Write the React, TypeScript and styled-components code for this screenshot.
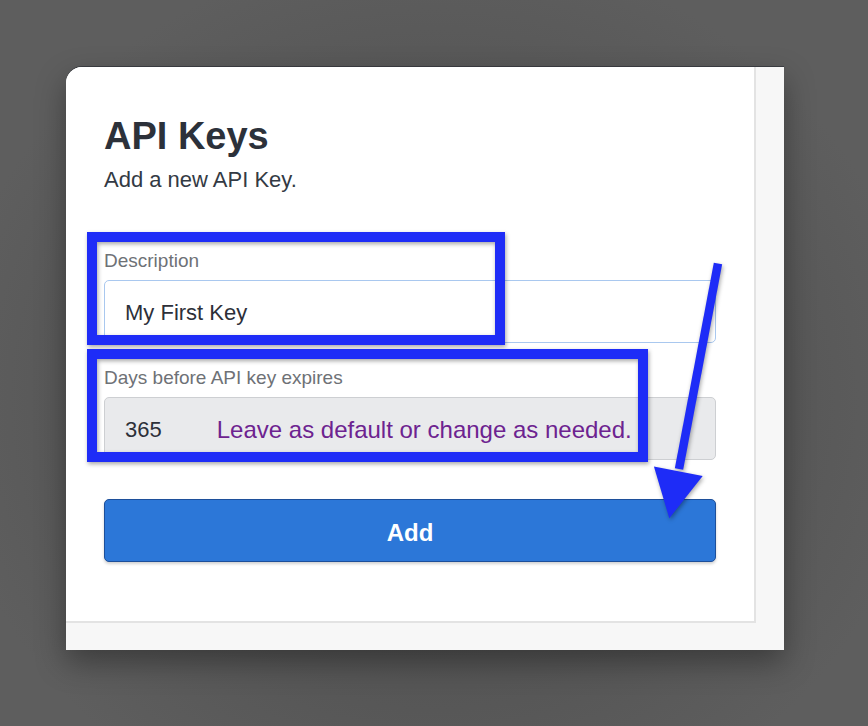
import React from "react";
import styled, { createGlobalStyle } from "styled-components";

const GlobalStyle = createGlobalStyle`
  html, body {
    margin: 0;
    padding: 0;
    background: #5e5e5e;
  }
  body {
    font-family: "Liberation Sans", Arial, Helvetica, sans-serif;
    width: 868px;
    height: 726px;
    overflow: hidden;
  }
`;

const Stage = styled.div`
  padding: 67px 0 0 66px;
  box-sizing: border-box;
  width: 868px;
  height: 726px;
  background: radial-gradient(ellipse at 50% 55%, #4a4a4a 0%, #575757 55%, #5e5e5e 80%);
`;

const Panel = styled.div`
  width: 718px;
  box-sizing: border-box;
  background: #f7f7f7;
  padding: 0 28px 27px 0;
  border-top-left-radius: 16px;
  overflow: hidden;
  box-shadow: 0 12px 30px rgba(0, 0, 0, 0.35), 0 -1px 0 rgba(40, 44, 52, 0.6);
`;

const Card = styled.div`
  position: relative;
  width: 690px;
  box-sizing: border-box;
  background: #ffffff;
  border-right: 2px solid #e3e3e3;
  border-bottom: 2px solid #e3e3e3;
  padding: 47px 38px 59px 38px;
`;

const Title = styled.h1`
  margin: 0;
  font-size: 38px;
  line-height: 44px;
  font-weight: 700;
  color: #2c313a;
`;

const Subtitle = styled.p`
  margin: 9px 0 0;
  font-size: 22px;
  line-height: 26px;
  color: #333a44;
`;

const Field = styled.div<{ $top: number }>`
  display: flex;
  flex-direction: column;
  gap: 8px;
  margin-top: ${(p) => p.$top}px;
`;

const Label = styled.label`
  font-size: 19px;
  line-height: 22px;
  color: #6e7176;
  font-weight: 400;
`;

const Input = styled.div<{ $variant: "focus" | "disabled" }>`
  height: 63px;
  box-sizing: border-box;
  display: flex;
  align-items: center;
  padding: 2px 20px 0;
  border-radius: 5px;
  border: 1px solid ${(p) => (p.$variant === "focus" ? "#a9c8ef" : "#cdcfd2")};
  background: ${(p) => (p.$variant === "focus" ? "#ffffff" : "#e9eaec")};
  font-size: 22px;
  line-height: 26px;
  color: #2d3039;
`;

const Note = styled.span`
  margin-left: 55px;
  font-size: 24px;
  line-height: 28px;
  color: #6d2390;
`;

const Button = styled.button`
  display: block;
  width: 100%;
  height: 63px;
  margin-top: 39px;
  padding: 5px 0 0;
  border-radius: 5px;
  border: 1px solid #1d4f9a;
  background: #2c77d8;
  color: #ffffff;
  font-family: "Liberation Sans", Arial, Helvetica, sans-serif;
  font-size: 24px;
  line-height: 28px;
  font-weight: 700;
  box-shadow: 0 2px 3px rgba(0, 0, 0, 0.18);
  cursor: pointer;
`;

const Highlight = styled.div<{ $left: number; $top: number; $w: number; $h: number }>`
  position: absolute;
  left: ${(p) => p.$left}px;
  top: ${(p) => p.$top}px;
  width: ${(p) => p.$w}px;
  height: ${(p) => p.$h}px;
  box-sizing: border-box;
  border: 10px solid #1e2cf7;
  filter: drop-shadow(1px 2px 2px rgba(0, 0, 0, 0.35));
  pointer-events: none;
`;

const ArrowLayer = styled.svg`
  position: absolute;
  left: 0;
  top: 0;
  width: 690px;
  height: 556px;
  pointer-events: none;
  filter: drop-shadow(1px 2px 2px rgba(0, 0, 0, 0.35));
`;

export default function App() {
  return (
    <>
      <GlobalStyle />
      <Stage>
        <Panel>
          <Card>
            <Title>API Keys</Title>
            <Subtitle>Add a new API Key.</Subtitle>
            <Field $top={57}>
              <Label>Description</Label>
              <Input $variant="focus">My First Key</Input>
            </Field>
            <Field $top={24}>
              <Label>Days before API key expires</Label>
              <Input $variant="disabled">
                365
                <Note>Leave as default or change as needed.</Note>
              </Input>
            </Field>
            <Button>Add</Button>

            <Highlight $left={21} $top={165} $w={418} $h={113} />
            <Highlight $left={21} $top={282} $w={561} $h={113} />
            <ArrowLayer viewBox="0 0 690 556">
              <line x1="652" y1="196.5" x2="613" y2="402" stroke="#1e2cf7" strokeWidth="8.5" />
              <polygon points="587.9,399.5 636.7,408.9 603.3,451.3" fill="#1e2cf7" />
            </ArrowLayer>
          </Card>
        </Panel>
      </Stage>
    </>
  );
}
